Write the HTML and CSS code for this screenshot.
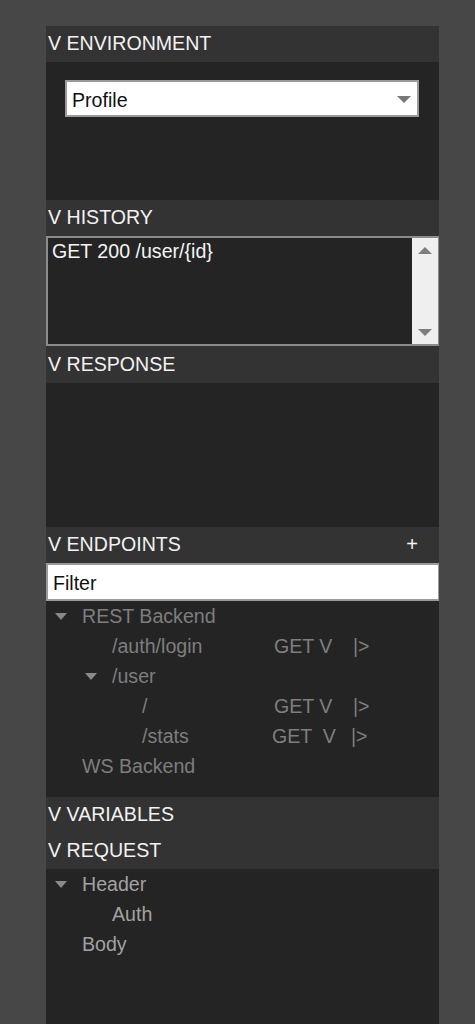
FILE: index.html
```html
<!DOCTYPE html>
<html>
<head>
<meta charset="utf-8">
<link rel="stylesheet" href="styles.css">
</head>
<body>
<div class="panel">
  <div class="hdr">V ENVIRONMENT</div>
  <div class="env-body">
    <div class="select">
      <span>Profile</span>
      <span class="sel-arrow"></span>
    </div>
  </div>

  <div class="hdr">V HISTORY</div>
  <div class="listbox">
    <div class="list-items">
      <div class="list-item">GET 200 /user/{id}</div>
    </div>
    <div class="scrollbar">
      <span class="arr-up"></span>
      <span class="arr-down"></span>
    </div>
  </div>

  <div class="hdr hdr-resp">V RESPONSE</div>
  <div class="resp-body"></div>

  <div class="hdr hdr-split"><span>V ENDPOINTS</span><span class="plus">+</span></div>
  <div class="filter">Filter</div>
  <div class="tree ep-tree">
    <div class="row d0 dim"><span class="tri"></span>REST Backend</div>
    <div class="row ep d1 dim"><span class="name">/auth/login</span><span class="method">GET V</span><span class="run">|&gt;</span></div>
    <div class="row d1b dim"><span class="tri"></span>/user</div>
    <div class="row ep d2 dim"><span class="name">/</span><span class="method">GET V</span><span class="run">|&gt;</span></div>
    <div class="row ep d2 dim alt"><span class="name">/stats</span><span class="method">GET  V</span><span class="run">|&gt;</span></div>
    <div class="row d0 dim"><span class="notri"></span>WS Backend</div>
  </div>

  <div class="hdr">V VARIABLES</div>
  <div class="hdr">V REQUEST</div>
  <div class="tree req-tree">
    <div class="row d0 light"><span class="tri"></span>Header</div>
    <div class="row d1 light">Auth</div>
    <div class="row d0 light"><span class="notri"></span>Body</div>
  </div>
</div>
</body>
</html>
```

FILE: styles.css
```css
html, body {
  margin: 0;
  padding: 0;
  background: #474747;
  height: 1024px;
  overflow: hidden;
}

body {
  font-family: "Liberation Sans", Arial, sans-serif;
  font-size: 19.6px;
  color: #eeeeee;
}

.panel {
  margin: 26px 0 0 46px;
  width: 393px;
  background: #242424;
  display: flex;
  flex-direction: column;
  height: 998px;
}

.hdr {
  height: 36px;
  line-height: 35px;
  background: #333333;
  padding-left: 2px;
  color: #f2f2f2;
  white-space: nowrap;
}

.hdr-resp {
  height: 37px;
  line-height: 36px;
}

.hdr-split {
  display: flex;
  justify-content: space-between;
}

.plus {
  padding-right: 21px;
  font-size: 20px;
  color: #f4f4f4;
}

.env-body {
  height: 138px;
  padding: 18px 0 0 19px;
  box-sizing: border-box;
}

.select {
  width: 354px;
  height: 37px;
  box-sizing: border-box;
  background: #ffffff;
  border: 2px solid #9a9a9a;
  display: flex;
  align-items: center;
  justify-content: space-between;
  padding: 3px 6px 0 5px;
  color: #111;
}

.sel-arrow {
  width: 0;
  height: 0;
  border-left: 7px solid transparent;
  border-right: 7px solid transparent;
  border-top: 7px solid #777777;
  margin-top: -2px;
}

.listbox {
  height: 110px;
  box-sizing: border-box;
  border: 2px solid #8c8c8c;
  border-right-width: 1px;
  display: flex;
  background: #242424;
}

.list-items {
  flex: 1;
  padding: 1px 0 0 4px;
}

.list-item {
  line-height: 24px;
  color: #f4f4f4;
}

.scrollbar {
  width: 26px;
  background: #efefef;
  display: flex;
  flex-direction: column;
  justify-content: space-between;
  align-items: center;
  padding: 9px 0 8px;
  box-sizing: border-box;
}

.arr-up {
  width: 0;
  height: 0;
  border-left: 7px solid transparent;
  border-right: 7px solid transparent;
  border-bottom: 7px solid #7d7d7d;
}

.arr-down {
  width: 0;
  height: 0;
  border-left: 7px solid transparent;
  border-right: 7px solid transparent;
  border-top: 7px solid #7d7d7d;
}

.resp-body {
  height: 144px;
}

.filter {
  height: 38px;
  box-sizing: border-box;
  background: #ffffff;
  border: 2px solid #9a9a9a;
  border-right-width: 1px;
  line-height: 36px;
  padding-left: 5px;
  color: #111;
}

.tree {
  display: flex;
  flex-direction: column;
}

.ep-tree {
  height: 196px;
  padding-top: 0;
}

.req-tree {
  flex: 1;
}

.row {
  height: 30px;
  line-height: 30px;
  display: flex;
  align-items: center;
  white-space: pre;
}

.dim { color: #7e7e7e; }
.light { color: #a2a2a2; }

.tri {
  width: 0;
  height: 0;
  border-left: 6px solid transparent;
  border-right: 6px solid transparent;
  border-top: 7px solid #8a8a8a;
  margin-right: 15px;
}

.notri {
  width: 12px;
  margin-right: 15px;
}

.d0 { padding-left: 9px; }
.d1 { padding-left: 66px; }
.d1b { padding-left: 39px; }
.d2 { padding-left: 96px; }

.ep .name { flex: none; }
.ep.d1 .name { width: 162px; }
.ep.d2 .name { width: 132px; }

.ep .method {
  width: 79px;
}

.ep.alt .name { width: 130px; }
```
